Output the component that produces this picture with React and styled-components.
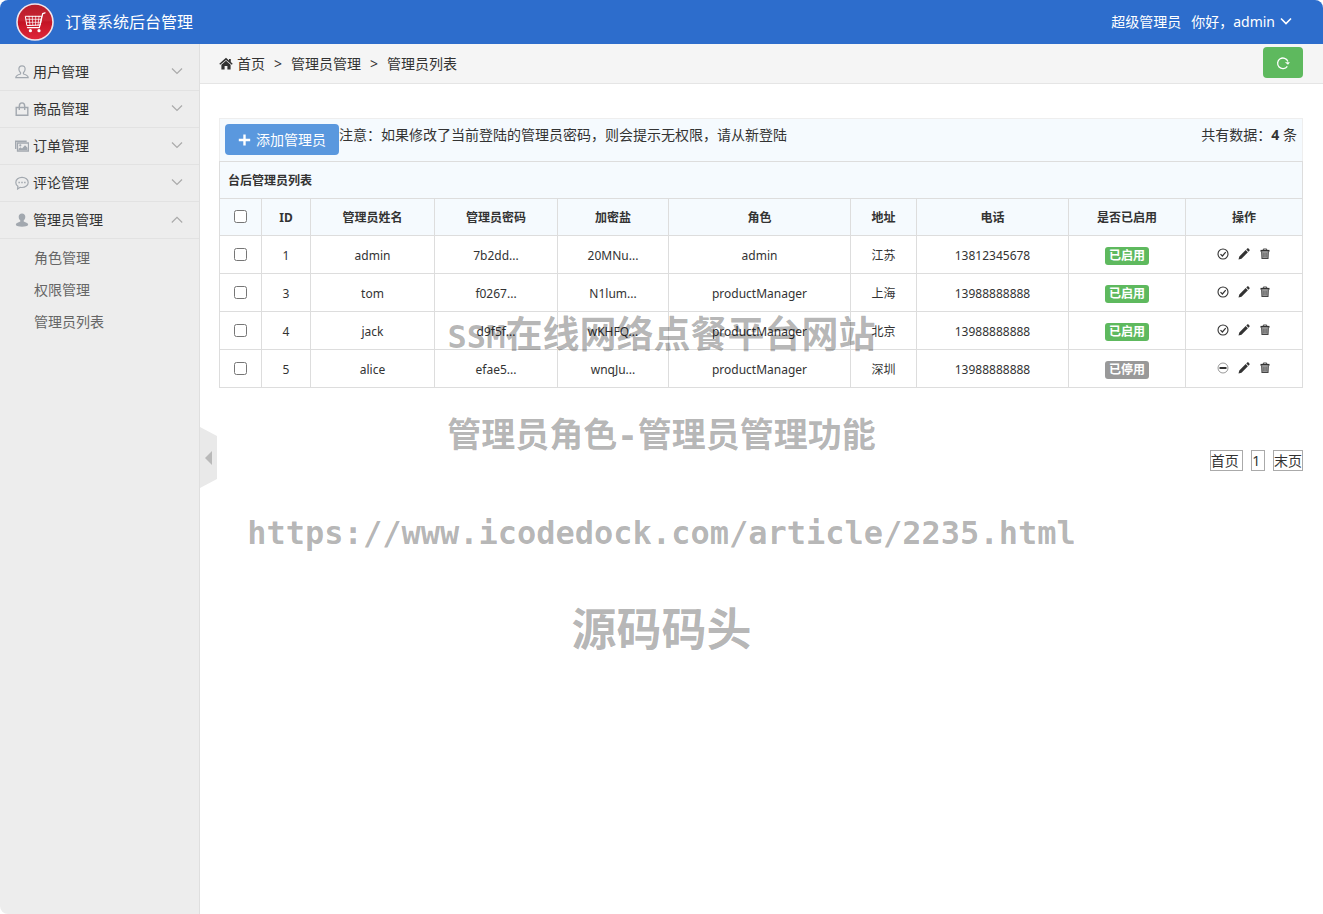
import React from "react";
import styled, { createGlobalStyle } from "styled-components";

const GlobalStyle = createGlobalStyle`
  *, *::before, *::after { box-sizing: border-box; }
  body {
    margin: 0;
    background: #fff;
    color: #333;
    font-family: "Noto Sans", "Noto Sans CJK SC", sans-serif;
    font-size: 14px;
    line-height: 20px;
  }
  a { color: inherit; text-decoration: none; }
  button { font: inherit; cursor: pointer; }
  svg { display: block; flex: none; }
`;

const Page = styled.div`
  min-height: 100vh;
  display: flex;
  flex-direction: column;
  border-radius: 8px;
  overflow: hidden;
  position: relative;
`;

const Header = styled.header`
  height: 44px;
  flex: none;
  display: flex;
  align-items: center;
  justify-content: space-between;
  padding: 0 31px 0 15px;
  background: #2d6dcc;
  color: #fff;
`;

const Brand = styled.a`
  display: flex;
  align-items: center;
  gap: 10px;
  font-size: 16px;
`;

const Account = styled.div`
  display: flex;
  align-items: center;
  gap: 10px;
`;

const AccountButton = styled.button`
  display: flex;
  align-items: center;
  gap: 5px;
  padding: 0;
  border: 0;
  background: none;
  color: #fff;
`;

const Body = styled.div`
  flex: 1;
  display: flex;
`;

const Sidebar = styled.nav`
  width: 200px;
  flex: none;
  padding-top: 10px;
  background: #ededed;
  border-right: 1px solid #dfdfdf;
`;

const MenuButton = styled.button`
  width: 100%;
  height: 37px;
  display: flex;
  align-items: center;
  gap: 4px;
  padding: 0 16px 0 15px;
  border: 0;
  border-bottom: 1px solid #e2e2e2;
  background: none;
  color: #333;
  text-align: left;
`;

const MenuLabel = styled.span`
  flex: 1;
`;

const SubMenu = styled.ul`
  margin: 0;
  padding: 3px 0 3px 34px;
  list-style: none;
  color: #666;
  line-height: 32px;
`;

const Content = styled.div`
  flex: 1;
  min-width: 0;
  position: relative;
`;

const BreadcrumbBar = styled.div`
  height: 40px;
  display: flex;
  align-items: flex-start;
  justify-content: space-between;
  padding: 3px 20px 0 19px;
  background: #f5f5f5;
  border-bottom: 1px solid #e5e5e5;
`;

const Crumbs = styled.nav`
  display: flex;
  align-items: center;
  gap: 9px;
  line-height: 33px;
`;

const Home = styled.a`
  display: flex;
  align-items: center;
  gap: 4px;
`;

const RefreshButton = styled.button`
  width: 40px;
  height: 31px;
  display: grid;
  place-items: center;
  padding: 0;
  border: 0;
  border-radius: 4px;
  background: #5eb95e;
  color: #fff;
`;

const Main = styled.main`
  padding: 34px 20px 20px 19px;
`;

const Toolbar = styled.div`
  display: flex;
  align-items: flex-start;
  height: 43px;
  padding: 5px;
  border: 1px solid #eee;
  border-bottom: 0;
  background: #f5fafe;
  line-height: 22px;
`;

const AddButton = styled.button`
  height: 31px;
  display: flex;
  align-items: center;
  gap: 5px;
  padding: 0 13px;
  border: 0;
  border-radius: 4px;
  background: #5a98de;
  color: #fff;
`;

const Total = styled.span`
  margin-left: auto;
`;

const Table = styled.table`
  width: 100%;
  table-layout: fixed;
  border-collapse: collapse;
  font-size: 12px;
  line-height: 20px;
`;

const Cell = styled.td`
  height: 38px;
  padding: ${(p) => (p.$control ? "0 8px 1px" : "2px 8px 0")};
  border: 1px solid #ddd;
  text-align: center;
`;

const HeadCell = styled.th`
  height: 37px;
  padding: ${(p) => (p.$control ? "0 8px 2px" : "2px 8px 0")};
  border: 1px solid #ddd;
  background: #f5fafe;
  text-align: ${(p) => p.$align || "center"};
  font-weight: 700;
`;

const Check = styled.input`
  display: block;
  width: 13px;
  height: 13px;
  margin: 0 auto;
`;

const Badge = styled.span`
  display: inline-block;
  padding: 0 4px;
  border-radius: 3px;
  background: ${(p) => (p.$on ? "#5eb95e" : "#999")};
  color: #fff;
  font-weight: 700;
  line-height: 18px;
`;

const Actions = styled.div`
  display: flex;
  justify-content: center;
  gap: 9px;
`;

const IconButton = styled.button`
  padding: 0;
  border: 0;
  background: none;
  color: #333;
`;

const Pager = styled.nav`
  display: flex;
  justify-content: flex-end;
  gap: 8px;
  margin-top: 62px;
`;

const PageLink = styled.a`
  border: 1px solid #aaa;
  line-height: 19px;
  white-space: pre;
`;

const CollapseTab = styled.button`
  position: absolute;
  left: 0;
  top: 383px;
  width: 17px;
  height: 61px;
  padding: 0 0 0 5px;
  border: 0;
  background: #e9e9e9;
  clip-path: polygon(0 0, 100% 9px, 100% 52px, 0 100%);
`;

const Watermark = styled.div`
  position: absolute;
  inset: 306px 0 auto;
  display: grid;
  gap: 38px;
  justify-items: center;
  color: rgba(0, 0, 0, 0.3);
  font-family: "DejaVu Sans Mono", "Noto Sans CJK SC", monospace;
  font-weight: 700;
  line-height: 60px;
  white-space: nowrap;
  pointer-events: none;
`;

const WatermarkLine = styled.span`
  font-size: ${(p) => p.$size}px;
`;

const Latin = styled.span`
  font-size: 32px;
`;

const Logo = () => (
  <svg width="40" height="40" viewBox="0 0 40 40">
    <defs>
      <linearGradient id="logoRed" x1="0" y1="0" x2="0" y2="1">
        <stop offset="0" stopColor="#b51d2b" />
        <stop offset="0.45" stopColor="#c92432" />
        <stop offset="0.5" stopColor="#c41425" />
        <stop offset="1" stopColor="#e0283a" />
      </linearGradient>
    </defs>
    <circle cx="20" cy="20" r="18" fill="url(#logoRed)" stroke="#f1e4ea" strokeWidth="1.6" />
    <g fill="none" stroke="#fff" strokeLinecap="round" strokeLinejoin="round">
      <path d="M30 10.800l-2.300.8-3.400 14H12.500" strokeWidth="1.3" />
      <path d="M10.700 14.300h16L25.300 23l-13 .6z" strokeWidth="1" />
      <path d="M14 14.300l1 9.200M17.300 14.300l.5 9M20.700 14.300l-.2 9M24 14.300l-1 9M11.200 17.300h15M11.800 20.300h14" strokeWidth=".7" />
    </g>
    <circle cx="15.4" cy="28.7" r="1.6" fill="#fff" />
    <circle cx="24" cy="28.7" r="1.6" fill="#fff" />
  </svg>
);

const Chevron = ({ up, size = 12, width = 1.2, color = "#aaa" }) => (
  <svg width={size} height={size} viewBox="0 0 12 12" fill="none" stroke={color} strokeWidth={width}>
    <path d={up ? "M.8 8.500L6 3.300l5.200 5.200" : "M1 2.500l5 5 5-5"} />
  </svg>
);

const menuIcons = {
  user: (
    <path d="M7 .8C4.900.8 3.900 2.200 3.900 4c0 1.500.6 2.600 1.500 3.500.5.600.2 1.400-.6 1.700C2.600 9.900.8 10.600.8 12.700h12.400c0-2.100-1.800-2.800-4-3.500-.8-.3-1.100-1.100-.6-1.700C9.500 6.600 10.100 5.500 10.100 4 10.100 2.200 9.100.8 7 .8z" fill="none" stroke="currentColor" strokeWidth="1.2" />
  ),
  bag: (
    <path d="M1.200 5.500h11.600v7.700H1.200zM4.300 8V4.200C4.300 2.200 5.400.9 7 .9s2.700 1.300 2.700 3.300V8" fill="none" stroke="currentColor" strokeWidth="1.4" />
  ),
  image: (
    <>
      <path d="M.7 10V2.200h11" fill="none" stroke="currentColor" strokeWidth="1.4" />
      <path d="M2.500 4h11v8h-11z" fill="none" stroke="currentColor" strokeWidth="1.3" />
      <circle cx="5.3" cy="6.4" r="1.1" fill="currentColor" />
      <path d="M3.500 11V9.700l2-1.500 1.500 1.200 3-3.200 2.500 2.600V11z" fill="currentColor" />
    </>
  ),
  comment: (
    <>
      <path d="M7 1.300c3.400 0 6.200 2.200 6.200 5.100S10.400 11.500 7 11.500c-.7 0-1.300-.1-1.900-.2L2.600 13l.3-2.700C1.600 9.400.8 8 .8 6.400.8 3.500 3.600 1.300 7 1.300z" fill="none" stroke="currentColor" strokeWidth="1.2" />
      <path d="M3.400 5.700h1.500v1.500H3.400zM6.250 5.700h1.500v1.500h-1.500zM9.100 5.700h1.500v1.500H9.100z" fill="currentColor" />
    </>
  ),
  admin: (
    <path d="M7 .4c2 0 3.300 1.300 3.300 3.400 0 1.600-.7 3-1.600 3.800v1l3.300 1.300c.8.400 1.200 1.100 1.200 2.100-.8 1-3.300 1.700-6.200 1.700S1.600 13 .8 12c0-1 .4-1.700 1.200-2.100l3.300-1.300v-1C4.400 6.800 3.700 5.400 3.700 3.800 3.700 1.700 5 .4 7 .4z" fill="currentColor" />
  ),
};

const MenuIcon = ({ name }) => (
  <svg width="14" height="14" viewBox="0 0 14 14" color="#a2a8af">{menuIcons[name]}</svg>
);

const HomeIcon = () => (
  <svg width="14" height="14" viewBox="0 0 14 14" fill="#333">
    <path d="M7 .8L10 3.400V2h1.800v3L13.700 6.700l-.9 1.100L7 2.900 1.200 7.800.3 6.700z" />
    <path d="M7 3.800l4.600 3.900v4.900H8.400V9H5.600v3.600H2.400V7.700z" />
  </svg>
);

const RefreshIcon = () => (
  <svg width="14" height="14" viewBox="0 0 14 14">
    <path d="M11.300 10.300A5.300 5.300 0 1 1 11.900 5.500" fill="none" stroke="currentColor" strokeWidth="1.3" />
    <path d="M8.900 6.300h5L12 8.800z" fill="currentColor" />
  </svg>
);

const PlusIcon = () => (
  <svg width="13" height="12" viewBox="0 0 13 12">
    <path d="M6.500 .5v11M.8 6h11.400" stroke="currentColor" strokeWidth="2.4" />
  </svg>
);

const StatusIcon = ({ on }) => (
  <svg width="12" height="12" viewBox="0 0 12 12" fill="none" stroke="currentColor">
    <circle cx="6" cy="6" r="5" strokeWidth={on ? 1.1 : 0.5} />
    {on ? <path d="M3.500 6.100l1.900 1.900 3.300-3.800" strokeWidth="1.2" /> : <path d="M2.500 6h7" strokeWidth="2" />}
  </svg>
);

const PencilIcon = () => (
  <svg width="12" height="12" viewBox="0 0 12 12" fill="currentColor">
    <path d="M.5 11.500l.8-3L7.700 2.100l2.200 2.200-6.400 6.400zM8.300 1.500l.9-.9c.4-.4.9-.4 1.300 0l.9.9c.4.400.4.900 0 1.300l-.9.900z" />
  </svg>
);

const TrashIcon = () => (
  <svg width="12" height="12" viewBox="0 0 12 12" fill="none" stroke="currentColor">
    <path d="M1.500 2.800h9" strokeWidth="1.8" />
    <path d="M4.300 2V1h3.400v1" strokeWidth=".9" />
    <path d="M2.700 3.500l.3 7h6l.3-7" fill="#aaa" stroke="#444" strokeWidth="1.1" />
    <path d="M4.700 4.500v5M6 4.500v5M7.300 4.500v5" strokeWidth=".5" />
  </svg>
);

const menu = [
  { icon: "user", label: "用户管理" },
  { icon: "bag", label: "商品管理" },
  { icon: "image", label: "订单管理" },
  { icon: "comment", label: "评论管理" },
  { icon: "admin", label: "管理员管理", items: ["角色管理", "权限管理", "管理员列表"] },
];

const columnWidths = [42, 49, 124, 123, 111, 182, 66, 152, 117, 117];
const columns = ["ID", "管理员姓名", "管理员密码", "加密盐", "角色", "地址", "电话", "是否已启用", "操作"];

const admins = [
  { id: 1, name: "admin", password: "7b2dd...", salt: "20MNu...", role: "admin", city: "江苏", phone: "13812345678", on: true },
  { id: 3, name: "tom", password: "f0267...", salt: "N1lum...", role: "productManager", city: "上海", phone: "13988888888", on: true },
  { id: 4, name: "jack", password: "d9f5f...", salt: "wKHFQ...", role: "productManager", city: "北京", phone: "13988888888", on: true },
  { id: 5, name: "alice", password: "efae5...", salt: "wnqJu...", role: "productManager", city: "深圳", phone: "13988888888", on: false },
];

export default function App() {
  return (
    <>
      <GlobalStyle />
      <Page>
        <Header>
          <Brand href="#home">
            <Logo />
            订餐系统后台管理
          </Brand>
          <Account>
            <span>超级管理员</span>
            <AccountButton type="button">
              你好，admin
              <Chevron color="#fff" width={1.6} />
            </AccountButton>
          </Account>
        </Header>
        <Body>
          <Sidebar>
            {menu.map(({ icon, label, items }) => (
              <React.Fragment key={label}>
                <MenuButton type="button" aria-expanded={Boolean(items)}>
                  <MenuIcon name={icon} />
                  <MenuLabel>{label}</MenuLabel>
                  <Chevron up={Boolean(items)} />
                </MenuButton>
                {items && (
                  <SubMenu>
                    {items.map((item) => (
                      <li key={item}><a href="#menu">{item}</a></li>
                    ))}
                  </SubMenu>
                )}
              </React.Fragment>
            ))}
          </Sidebar>
          <Content>
            <BreadcrumbBar>
              <Crumbs>
                <Home href="#home"><HomeIcon />首页</Home>
                <span>&gt;</span>
                <span>管理员管理</span>
                <span>&gt;</span>
                <span>管理员列表</span>
              </Crumbs>
              <RefreshButton type="button" aria-label="刷新"><RefreshIcon /></RefreshButton>
            </BreadcrumbBar>
            <Main>
              <Toolbar>
                <AddButton type="button"><PlusIcon />添加管理员</AddButton>
                <span>注意：如果修改了当前登陆的管理员密码，则会提示无权限，请从新登陆</span>
                <Total>共有数据：<strong>4</strong> 条</Total>
              </Toolbar>
              <Table>
                <colgroup>
                  {columnWidths.map((w, i) => <col key={i} width={w} />)}
                </colgroup>
                <thead>
                  <tr><HeadCell colSpan={10} $align="left">台后管理员列表</HeadCell></tr>
                  <tr>
                    <HeadCell $control><Check type="checkbox" aria-label="全选" /></HeadCell>
                    {columns.map((c) => <HeadCell key={c}>{c}</HeadCell>)}
                  </tr>
                </thead>
                <tbody>
                  {admins.map((a) => (
                    <tr key={a.id}>
                      <Cell $control><Check type="checkbox" aria-label={a.name} /></Cell>
                      <Cell>{a.id}</Cell>
                      <Cell>{a.name}</Cell>
                      <Cell>{a.password}</Cell>
                      <Cell>{a.salt}</Cell>
                      <Cell>{a.role}</Cell>
                      <Cell>{a.city}</Cell>
                      <Cell>{a.phone}</Cell>
                      <Cell><Badge $on={a.on}>{a.on ? "已启用" : "已停用"}</Badge></Cell>
                      <Cell $control>
                        <Actions>
                          <IconButton type="button" aria-label="切换状态"><StatusIcon on={a.on} /></IconButton>
                          <IconButton type="button" aria-label="编辑"><PencilIcon /></IconButton>
                          <IconButton type="button" aria-label="删除"><TrashIcon /></IconButton>
                        </Actions>
                      </Cell>
                    </tr>
                  ))}
                </tbody>
              </Table>
              <Pager>
                <PageLink href="#first">{"首页 "}</PageLink>
                <PageLink href="#1">{"1 "}</PageLink>
                <PageLink href="#last">末页</PageLink>
              </Pager>
            </Main>
            <CollapseTab type="button" aria-label="收起菜单">
              <svg width="7" height="14" viewBox="0 0 7 14"><path d="M7 0v14L0 7z" fill="#b9b9b9" /></svg>
            </CollapseTab>
          </Content>
        </Body>
        <Watermark>
          <WatermarkLine $size={37}><Latin>SSM</Latin>在线网络点餐平台网站</WatermarkLine>
          <WatermarkLine $size={34}>管理员角色-管理员管理功能</WatermarkLine>
          <WatermarkLine $size={32}>https://www.icodedock.com/article/2235.html</WatermarkLine>
          <WatermarkLine $size={45}>源码码头</WatermarkLine>
        </Watermark>
      </Page>
    </>
  );
}
